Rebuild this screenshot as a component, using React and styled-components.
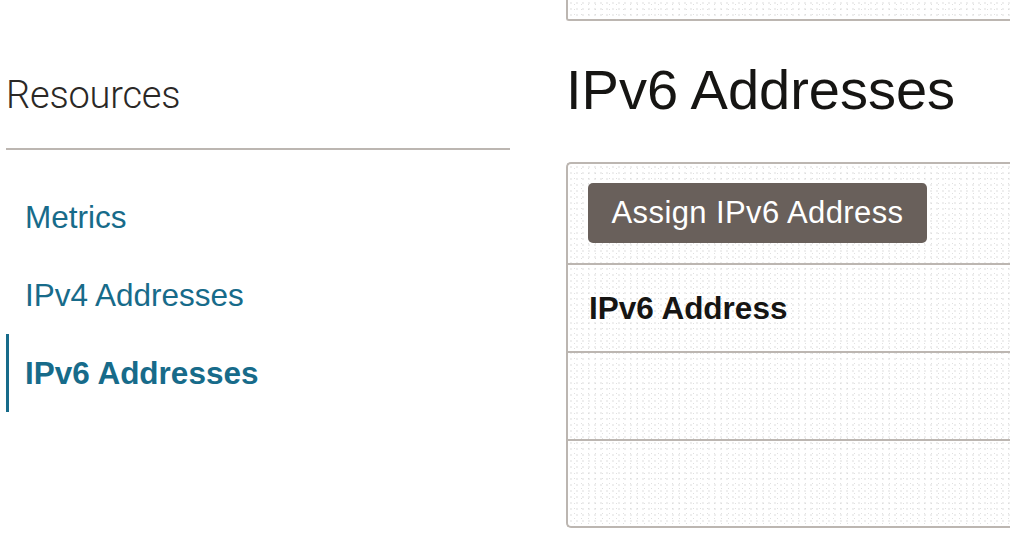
import React from 'react'
import styled, { createGlobalStyle } from 'styled-components'

const GlobalStyle = createGlobalStyle`
    html, body {
        margin: 0;
        padding: 0;
        background: #ffffff;
        overflow: hidden;
    }
    body {
        font-family: "Liberation Sans", Arial, sans-serif;
        color: #161513;
    }
`

const dots = `
    background-color: #ffffff;
    background-image:
        radial-gradient(circle, #dadada 0.6px, transparent 0.8px),
        radial-gradient(circle, #e0e0e0 0.6px, transparent 0.8px);
    background-size: 6px 6px, 7px 5px;
    background-position: 0 0, 3px 2px;
`

const Page = styled.div`
    display: flex;
    width: 1010px;
    height: 552px;
    padding-left: 6px;
    box-sizing: border-box;
    overflow: hidden;
`

const Sidebar = styled.aside`
    width: 504px;
    flex-shrink: 0;
    display: flex;
    flex-direction: column;
`

const SideTitle = styled.h2`
    margin: 73px 0 0;
    font-family: Roboto, "Liberation Sans", sans-serif;
    font-weight: 300;
    font-size: 38px;
    line-height: 44px;
    color: #2a2826;
    letter-spacing: -0.2px;
`

const Divider = styled.hr`
    margin: 31px 0 0;
    height: 2px;
    border: 0;
    background: #bcb6b1;
`

const Menu = styled.nav`
    display: flex;
    flex-direction: column;
    padding-top: 28px;
`

const MenuItem = styled.a`
    display: flex;
    align-items: center;
    height: 78px;
    padding: 2px 0 0 16px;
    box-sizing: border-box;
    border-left: 3px solid ${p => (p.$active ? '#176b8a' : 'transparent')};
    font-size: 31.5px;
    line-height: 1;
    font-weight: ${p => (p.$active ? 700 : 400)};
    color: #176b8a;
    text-decoration: none;
    cursor: pointer;
`

const Main = styled.main`
    margin-left: 56px;
    flex: 1;
    min-width: 0;
    display: flex;
    flex-direction: column;
`

const TopBox = styled.div`
    width: 700px;
    height: 19px;
    border-left: 2px solid #bcb6b1;
    border-bottom: 2px solid #bcb6b1;
    border-bottom-left-radius: 3px;
    ${dots}
`

const Heading = styled.h1`
    margin: 41px 0 0;
    font-weight: 400;
    font-size: 56px;
    line-height: 55px;
    color: #161513;
    white-space: nowrap;
`

const Panel = styled.section`
    margin-top: 45px;
    width: 700px;
    border: 2px solid #bcb6b1;
    border-right: 0;
    border-radius: 5px 0 0 5px;
    overflow: hidden;
    ${dots}
`

const Toolbar = styled.div`
    display: flex;
    padding: 19px 20px 20px;
    border-bottom: 2px solid #bcb6b1;
`

const Button = styled.button`
    height: 60px;
    width: 339px;
    padding: 0;
    border: 0;
    border-radius: 5px;
    background: #69605b;
    color: #ffffff;
    font-family: "Liberation Sans", Arial, sans-serif;
    font-size: 31px;
    letter-spacing: 0.4px;
    cursor: pointer;
`

const Row = styled.div`
    height: ${p => p.$h}px;
    box-sizing: border-box;
    padding: 28px 21px 0;
    border-bottom: ${p => (p.$last ? '0' : '2px solid #bcb6b1')};
    font-size: 31.5px;
    line-height: 1;
    font-weight: ${p => (p.$head ? 700 : 400)};
    color: #161513;
`

const App = () => {
    return (
        <Page>
            <GlobalStyle />
            <Sidebar>
                <SideTitle>Resources</SideTitle>
                <Divider />
                <Menu>
                    <MenuItem>Metrics</MenuItem>
                    <MenuItem>IPv4 Addresses</MenuItem>
                    <MenuItem $active>IPv6 Addresses</MenuItem>
                </Menu>
            </Sidebar>
            <Main>
                <TopBox />
                <Heading>IPv6 Addresses</Heading>
                <Panel>
                    <Toolbar>
                        <Button>Assign IPv6 Address</Button>
                    </Toolbar>
                    <Row $head $h={88}>IPv6 Address</Row>
                    <Row $h={88} />
                    <Row $last $h={85} />
                </Panel>
            </Main>
        </Page>
    )
}

export default App
